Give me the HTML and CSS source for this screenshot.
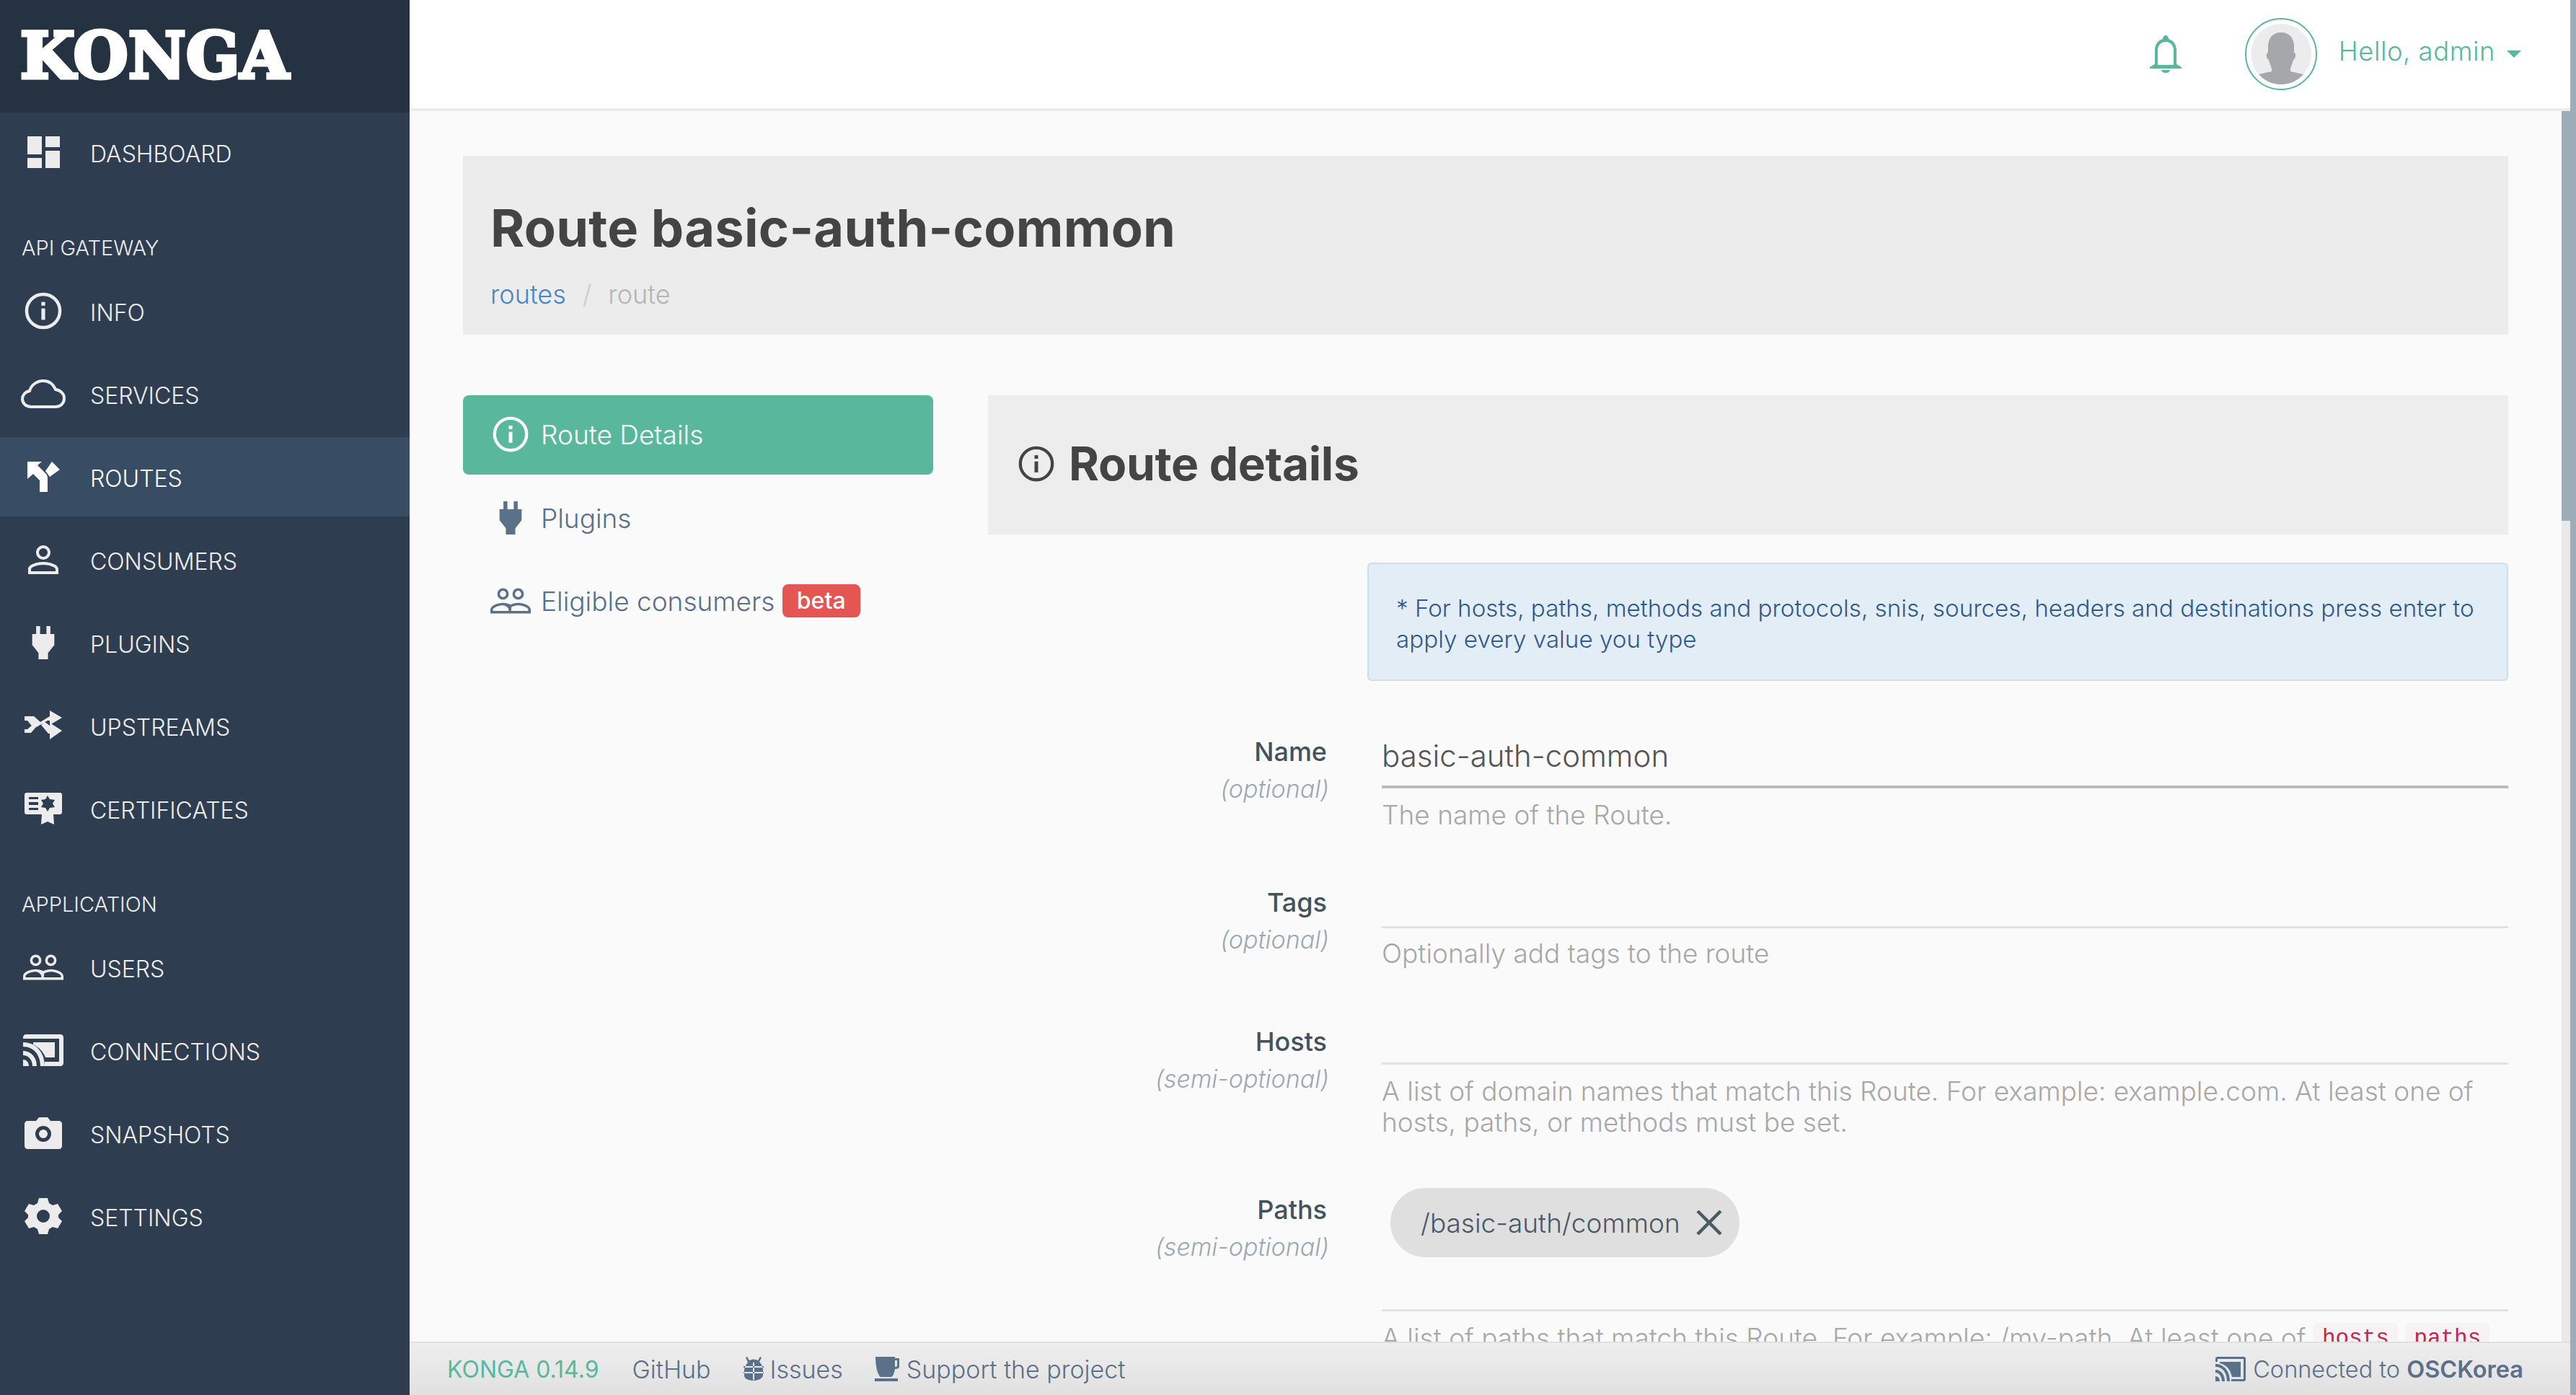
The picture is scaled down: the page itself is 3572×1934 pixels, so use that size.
FILE: index.html
```html
<!DOCTYPE html>
<html>
<head>
	<meta charset="utf-8">
	<title>Konga</title>
	<link rel="stylesheet" href="styles.css">
</head>
<body>
	<svg class="sprite" width="0" height="0">
		<symbol id="i-info" viewBox="0 0 48 48"><circle cx="24" cy="24" r="20.5" fill="none" stroke="currentColor" stroke-width="4"/><rect x="21.7" y="21" width="4.6" height="14" fill="currentColor"/><rect x="21.7" y="13" width="4.6" height="4.6" fill="currentColor"/></symbol>
		<symbol id="i-plug" viewBox="10 4 28 42"><path fill="currentColor" d="M15 4h5v10h8V4h5v10h5v14l-8 10v8H18v-8l-8-10V14h5z"/></symbol>
		<symbol id="i-users" viewBox="0 0 64 48"><path fill="currentColor" fill-rule="evenodd" d="M20 4a9 9 0 1 1 0 18 9 9 0 0 1 0-18zm0 4a5 5 0 1 0 0 10 5 5 0 0 0 0-10zM44 4a9 9 0 1 1 0 18 9 9 0 0 1 0-18zm0 4a5 5 0 1 0 0 10 5 5 0 0 0 0-10zM0 44v-6c0-7 12-11 20-11 4 0 9 1 12 3 3-2 8-3 12-3 8 0 20 4 20 11v6zm4-4h25v-2c0-3-5-7-9-7-6 0-16 3-16 7zm29 0h27v-2c0-4-10-7-16-7-4 0-8 1-11 3 1 1 0 2 0 4z"/></symbol>
	</svg>

	<div class="app">
		<aside class="sidebar">
			<div class="logo">KONGA</div>
			<ul class="nav">
				<li class="nav-item">
					<span class="nav-icon"><svg width="45" height="44" viewBox="0 0 45 44"><path fill="#ececec" d="M0 0h20v25H0zM25 0h20v15H25zM25 20h20v24H25zM0 30h20v14H0z"/></svg></span>DASHBOARD
				</li>
				<li class="nav-title">API GATEWAY</li>
				<li class="nav-item">
					<span class="nav-icon"><svg width="54" height="54"><use href="#i-info"/></svg></span>INFO
				</li>
				<li class="nav-item">
					<span class="nav-icon"><svg width="62" height="40" viewBox="0 0 62 40"><path fill="none" stroke="currentColor" stroke-width="4" d="M14 38C7 38 2 33 2 27c0-5 4-10 10-11 2-8 10-14 19-14 8 0 14 5 17 12 7 1 12 6 12 12 0 7-5 12-12 12z"/></svg></span>SERVICES
				</li>
				<li class="nav-item active">
					<span class="nav-icon"><svg width="45" height="42" viewBox="0 0 45 42"><path fill="#fff" d="M0 0h20l-6 5 12 12c2 3 2 5 2 7v18H17V26L8 17l-8 7zM34 0l11 11-14 10-6-8z"/></svg></span>ROUTES
				</li>
				<li class="nav-item">
					<span class="nav-icon"><svg width="42" height="42" viewBox="0 0 42 42"><path fill="currentColor" fill-rule="evenodd" d="M21 1a10 10 0 1 1 0 20 10 10 0 0 1 0-20zm0 4a6 6 0 1 0 0 12 6 6 0 0 0 0-12zM0 41v-7c0-7 14-10 21-10s21 3 21 10v7zm4-4h34v-3c0-3-10-6-17-6S4 31 4 34z"/></svg></span>CONSUMERS
				</li>
				<li class="nav-item">
					<span class="nav-icon"><svg width="32" height="46"><use href="#i-plug"/></svg></span>PLUGINS
				</li>
				<li class="nav-item">
					<span class="nav-icon"><svg width="52" height="44" viewBox="0 0 52 44"><path fill="currentColor" d="M0 9h13l9 8 13-8V1l17 10-17 10v-6h-3L13 26 4 15H0zM0 27h4l7-6 4 4-6 7H0zM23 21l5-4 7 5v-4l17 11-17 12v-8h-2z"/></svg></span>UPSTREAMS
				</li>
				<li class="nav-item">
					<span class="nav-icon"><svg width="52" height="46" viewBox="0 0 52 44"><path fill="currentColor" fill-rule="evenodd" d="M3 0h46c2 0 3 1 3 3v24c0 2-1 3-3 3H40l1 14-9-4-9 4 1-14H3c-2 0-3-1-3-3V3c0-2 1-3 3-3zm3 6v3h13V6zm0 7v4h13v-4zm0 8v3h13v-3zM32 4l-3 5-6 1 3 5-3 5 6 1 3 5 3-5 7-1-3-5 3-5-7-1z"/></svg></span>CERTIFICATES
				</li>
				<li class="nav-title">APPLICATION</li>
				<li class="nav-item">
					<span class="nav-icon"><svg width="56" height="42"><use href="#i-users"/></svg></span>USERS
				</li>
				<li class="nav-item">
					<span class="nav-icon"><svg width="56" height="44" viewBox="0 0 56 44"><path fill="currentColor" d="M4 0h48c2 0 4 2 4 4v36c0 2-2 4-4 4H30v-6h20V6H0V4c0-2 2-4 4-4zM44 11v21H31c-3-8-9-14-17-18v-3zM0 11c18 0 30 14 30 33h-6C24 28 14 17 0 17zM0 23c11 0 19 9 19 21h-6c0-9-6-15-13-15zM0 35c5 0 8 4 8 9H0z"/></svg></span>CONNECTIONS
				</li>
				<li class="nav-item">
					<span class="nav-icon"><svg width="52" height="44" viewBox="0 0 52 44"><path fill="currentColor" fill-rule="evenodd" d="M16 5l4-5h12l4 5h12c2 0 4 2 4 4v31c0 2-2 4-4 4H4c-2 0-4-2-4-4V9c0-2 2-4 4-4zm10 7a11 11 0 1 0 0 22 11 11 0 0 0 0-22zm0 5a6 6 0 1 1 0 12 6 6 0 0 1 0-12z"/></svg></span>SNAPSHOTS
				</li>
				<li class="nav-item">
					<span class="nav-icon"><svg width="52" height="50" viewBox="0 0 52 50"><path fill="currentColor" fill-rule="evenodd" d="M20 0h12l2 7 5 3 7-2 6 10-5 5v4l5 5-6 10-7-2-5 3-2 7H20l-2-7-5-3-7 2L0 32l5-5v-4l-5-5L6 8l7 2 5-3zm6 16a9 9 0 1 0 0 18 9 9 0 0 0 0-18z"/></svg></span>SETTINGS
				</li>
			</ul>
		</aside>

		<div class="main">
			<header class="topbar">
				<svg class="bell" width="44" height="52" viewBox="0 0 44 52"><path fill="#59b89c" fill-rule="evenodd" d="M22 0c2 0 4 2 4 5 7 2 11 8 11 16v19l7 4v2H0v-2l7-4V21C7 13 11 7 18 5c0-3 2-5 4-5zm0 9c-7 0-11 5-11 12v20h22V21c0-7-4-12-11-12zM16 48h12c-1 3-3 4-6 4s-5-1-6-4z"/></svg>
				<span class="avatar">
					<svg width="84" height="84" viewBox="0 0 84 84"><circle cx="42" cy="42" r="42" fill="#ececec"/><path fill="#a5a7aa" d="M42 12c12 0 18 8 18 20v8c3 0 3 8-1 10-1 5-3 9-4 12v4l18 4A42 42 0 0 1 42 84a42 42 0 0 1-31-14l18-4v-4c-1-3-3-7-4-12-4-2-4-10-1-10v-8c0-12 6-20 18-20z"/></svg>
				</span>
				<span class="hello">Hello, admin</span>
				<span class="caret"></span>
			</header>

			<div class="content">
				<section class="page-head">
					<h1>Route basic-auth-common</h1>
					<div class="crumbs"><a>routes</a><span class="sep">/</span><span>route</span></div>
				</section>

				<div class="columns">
					<ul class="side-menu">
						<li class="side-item current"><span class="side-icon"><svg width="52" height="52"><use href="#i-info"/></svg></span>Route Details</li>
						<li class="side-item"><span class="side-icon"><svg width="32" height="46"><use href="#i-plug"/></svg></span>Plugins</li>
						<li class="side-item"><span class="side-icon"><svg width="56" height="42"><use href="#i-users"/></svg></span>Eligible consumers <span class="badge">beta</span></li>
					</ul>

					<div class="panel">
						<div class="panel-head">
							<svg width="52" height="52"><use href="#i-info"/></svg>
							<h2>Route details</h2>
						</div>

						<div class="form-row">
							<div class="form-label"></div>
							<div class="alert">* For hosts, paths, methods and protocols, snis, sources, headers and destinations press enter to apply every value you type</div>
						</div>

						<div class="form-row field-name">
							<div class="form-label"><b>Name</b><i>(optional)</i></div>
							<div class="form-field">
								<div class="input strong">basic-auth-common</div>
								<p class="help">The name of the Route.</p>
							</div>
						</div>

						<div class="form-row field-tags">
							<div class="form-label"><b>Tags</b><i>(optional)</i></div>
							<div class="form-field">
								<div class="input"></div>
								<p class="help">Optionally add tags to the route</p>
							</div>
						</div>

						<div class="form-row field-hosts">
							<div class="form-label"><b>Hosts</b><i>(semi-optional)</i></div>
							<div class="form-field">
								<div class="input"></div>
								<p class="help">A list of domain names that match this Route. For example: example.com. At least one of hosts, paths, or methods must be set.</p>
							</div>
						</div>

						<div class="form-row field-paths">
							<div class="form-label"><b>Paths</b><i>(semi-optional)</i></div>
							<div class="form-field">
								<div class="input tags"><span class="chip">/basic-auth/common<svg width="36" height="34" viewBox="0 0 36 34"><path stroke="#4a5a63" stroke-width="4.500" d="M2 1l32 32M34 1L2 33"/></svg></span></div>
								<p class="help help-code">A list of paths that match this Route. For example: /my-path. At least one of <code>hosts</code> <code>paths</code></p>
							</div>
						</div>
					</div>
				</div>
			</div>

			<footer class="footer">
				<span class="version">KONGA 0.14.9</span>
				<a class="foot-link">GitHub</a>
				<a class="foot-link"><svg width="30" height="34" viewBox="0 0 28 34"><path fill="#5b7089" fill-rule="evenodd" d="M5 0l3 5c4-2 8-2 12 0l3-5 2 1-3 6c3 3 5 7 5 11v7c0 4-5 8-13 8S1 30 1 26v-7c0-4 2-8 5-11L3 1zM0 13h28v2H0zm0 8h28v2H0zM13 8h2v24h-2z"/></svg>Issues</a>
				<a class="foot-link"><svg width="36" height="34" viewBox="0 0 36 34"><path fill="#5b7089" fill-rule="evenodd" d="M1 0h27v2h6v12c0 2-2 3-6 3-1 6-3 10-5 11H8C4 25 1 14 1 0zm27 5v9c2 0 3-1 3-2V5zM0 30h32v4H0z"/></svg>Support the project</a>
				<span class="connected"><svg width="42" height="34" viewBox="0 0 42 34"><path fill="#5b7089" d="M3 0h36c2 0 3 1 3 3v28c0 2-1 3-3 3H22v-3h17V3H3v4H0V3c0-2 1-3 3-3zM6 7h29v21H23C21 18 15 11 6 9zM0 10c12 0 20 10 20 24h-4C16 22 10 14 0 14zM0 18c8 0 13 7 13 16H9c0-7-4-12-9-12zM0 27c4 0 6 3 6 7H0z"/></svg><span>Connected to <b>OSCKorea</b></span></span>
			</footer>
		</div>
	</div>

	<div class="scroll-outer"></div>
	<div class="scroll-inner"></div>
</body>
</html>
```

FILE: styles.css
```css
* {
	box-sizing: border-box;
}

html, body {
	margin: 0;
	height: 100%;
	overflow: hidden;
}

body {
	font-family: "Inter", "Open Sans", sans-serif;
	background: #fafafa;
	color: #44525c;
}

ul {
	list-style: none;
	margin: 0;
	padding: 0;
}

.sprite {
	position: absolute;
}

.app {
	display: flex;
	height: 1934px;
}

/* sidebar */
.sidebar {
	width: 568px;
	flex: none;
	background: #2e3e50;
	color: #ececec;
}

.logo {
	height: 156px;
	background: #253241;
	color: #fff;
	padding-left: 28px;
	font-family: "DejaVu Serif", serif;
	font-weight: 700;
	font-size: 87px;
	line-height: 156px;
	letter-spacing: 0.500px;
	-webkit-text-stroke: 5px #fff;
}

.nav-item {
	display: flex;
	align-items: center;
	height: 110px;
	margin-bottom: 5px;
	padding-top: 4px;
	font-size: 32px;
	font-weight: 300;
}

.nav-item.active {
	background: #384c64;
	color: #fff;
}

.nav-icon {
	width: 125px;
	flex: none;
	display: flex;
	justify-content: center;
	padding-right: 5px;
	margin-top: -4px;
}

.nav-title {
	height: 105px;
	padding: 54px 0 0 30px;
	font-size: 29px;
	line-height: 38px;
	font-weight: 300;
}

/* top */
.main {
	flex: 1;
	min-width: 0;
	display: flex;
	flex-direction: column;
	margin-right: 8px;
}

.topbar {
	height: 154px;
	flex: none;
	background: #fff;
	border-bottom: 4px solid #ececec;
	display: flex;
	align-items: center;
	padding-right: 68px;
	color: #59b89c;
}

.bell {
	margin-left: auto;
	margin-right: 88px;
}

.avatar {
	width: 100px;
	height: 100px;
	border: 2px solid #59b89c;
	border-radius: 50%;
	display: flex;
	align-items: center;
	justify-content: center;
	margin-right: 30px;
}

.avatar svg {
	display: block;
}

.hello {
	font-size: 36.500px;
	font-weight: 300;
	letter-spacing: 0.5px;
	margin-bottom: 8px;
}

.caret {
	margin-left: 16px;
	border-top: 10px solid #59b89c;
	border-left: 10px solid transparent;
	border-right: 10px solid transparent;
}

/* content */
.content {
	flex: 1;
	min-height: 0;
	overflow: hidden;
	padding: 62px 74px 0;
	border-right: 12px solid #e9e9e9;
}

.page-head {
	background: #ececec;
	height: 248px;
	padding: 58px 38px 0;
}

h1 {
	margin: 0;
	font-size: 72px;
	line-height: 84px;
	font-weight: 700;
	color: #444;
	letter-spacing: 0.3px;
}

.crumbs {
	margin-top: 28px;
	font-size: 36px;
	line-height: 44px;
	font-weight: 300;
	color: #b5b5b5;
}

.crumbs a {
	color: #4a86c5;
}

.sep {
	margin: 0 23px;
	color: #ccc;
}

.columns {
	display: flex;
	margin-top: 84px;
	gap: 76px;
}

.side-menu {
	width: 652px;
	flex: none;
}

.side-item {
	display: flex;
	align-items: center;
	height: 110px;
	margin-bottom: 5px;
	padding-left: 38px;
	font-size: 37px;
	font-weight: 300;
	color: #5b7089;
	border-radius: 8px;
	white-space: pre;
}

.side-item.current {
	background: #59b89c;
	color: #fff;
	padding-bottom: 2px;
}

.side-icon {
	width: 56px;
	margin-right: 14px;
	display: flex;
	justify-content: center;
}

.badge {
	background: #e55552;
	color: #fff;
	font-size: 32px;
	font-weight: 500;
	line-height: 46px;
	padding: 0 20px;
	border-radius: 8px;
}

.panel {
	flex: 1;
	min-width: 0;
}

.panel-head {
	height: 193px;
	background: #ededed;
	display: flex;
	align-items: center;
	padding: 0 0 4px 41px;
	gap: 19px;
	color: #444;
}

h2 {
	margin: 0;
	font-size: 64px;
	font-weight: 700;
	color: #444;
	letter-spacing: -0.3px;
}

.form-row {
	display: flex;
}

.form-label {
	width: 470px;
	flex: none;
	text-align: right;
}

.form-label b {
	display: block;
	font-size: 36px;
	line-height: 52px;
	font-weight: 500;
	color: #44525c;
}

.form-label i {
	display: block;
	margin-right: -3px;
	font-size: 34px;
	line-height: 52px;
	font-weight: 300;
	color: #9aa9b3;
}

.alert {
	flex: 1;
	margin: 39px 0 0 56px;
	height: 164px;
	padding: 40px 38px 0;
	background: #e2edf6;
	border: 2px solid #c9dfee;
	border-radius: 6px;
	color: #31598a;
	font-size: 33.200px;
	font-weight: 300;
	line-height: 43px;
}

.form-field {
	flex: 1;
	margin-left: 76px;
	min-width: 0;
}

.input {
	border-bottom: 3px solid #e2e2e2;
	font-size: 42px;
	font-weight: 300;
	color: #555;
}

.input.strong {
	height: 77px;
	line-height: 64px;
	border-bottom: 4px solid #bbb;
}

.help {
	margin: 15px 0 0;
	font-size: 37px;
	font-weight: 300;
	line-height: 43px;
	color: #a8a8a8;
}

.help-code {
	white-space: nowrap;
}

.field-name {
	margin-top: 72px;
}

.field-tags {
	margin-top: 74px;
}

.field-tags .input {
	height: 62px;
}

.field-tags .help {
	margin-top: 13px;
}

.field-hosts {
	margin-top: 75px;
}

.field-hosts .input {
	height: 58px;
}

.field-paths {
	margin-top: 74px;
}

.tags {
	height: 171px;
	margin-top: -4px;
	padding-left: 12px;
}

.chip {
	display: inline-flex;
	align-items: center;
	height: 96px;
	padding: 0 24px 0 42px;
	gap: 22px;
	background: #dfdfdf;
	border-radius: 48px;
	font-size: 37px;
	color: #4a5a63;
}

code {
	position: relative;
	top: -4px;
	font-family: "Liberation Mono", monospace;
	font-size: 31px;
	padding: 4px 12px;
	background: #f7f2f4;
	color: #c7254e;
	border-radius: 6px;
}

/* footer */
.footer {
	height: 74px;
	flex: none;
	display: flex;
	align-items: center;
	padding-left: 52px;
	padding-right: 65px;
	border-top: 2px solid #e0e0e0;
	background: linear-gradient(#eeeeee, #e0e0e0);
	font-size: 34px;
	font-weight: 300;
	color: #5b7089;
}

.version {
	color: #59b89c;
	font-size: 32px;
	font-weight: 400;
	margin-right: 46px;
}

.foot-link {
	display: flex;
	align-items: center;
	gap: 8px;
	margin-right: 44px;
}

.connected {
	margin-left: auto;
	display: flex;
	align-items: center;
	gap: 10px;
	font-size: 32.500px;
}

.connected b {
	font-weight: 600;
}

/* page scrollbars */
.scroll-outer {
	position: absolute;
	top: 0;
	right: 0;
	bottom: 0;
	width: 8px;
	background: #9dacb7;
}

.scroll-inner {
	position: absolute;
	top: 154px;
	right: 8px;
	width: 12px;
	height: 568px;
	background: #9dacb7;
}
```
